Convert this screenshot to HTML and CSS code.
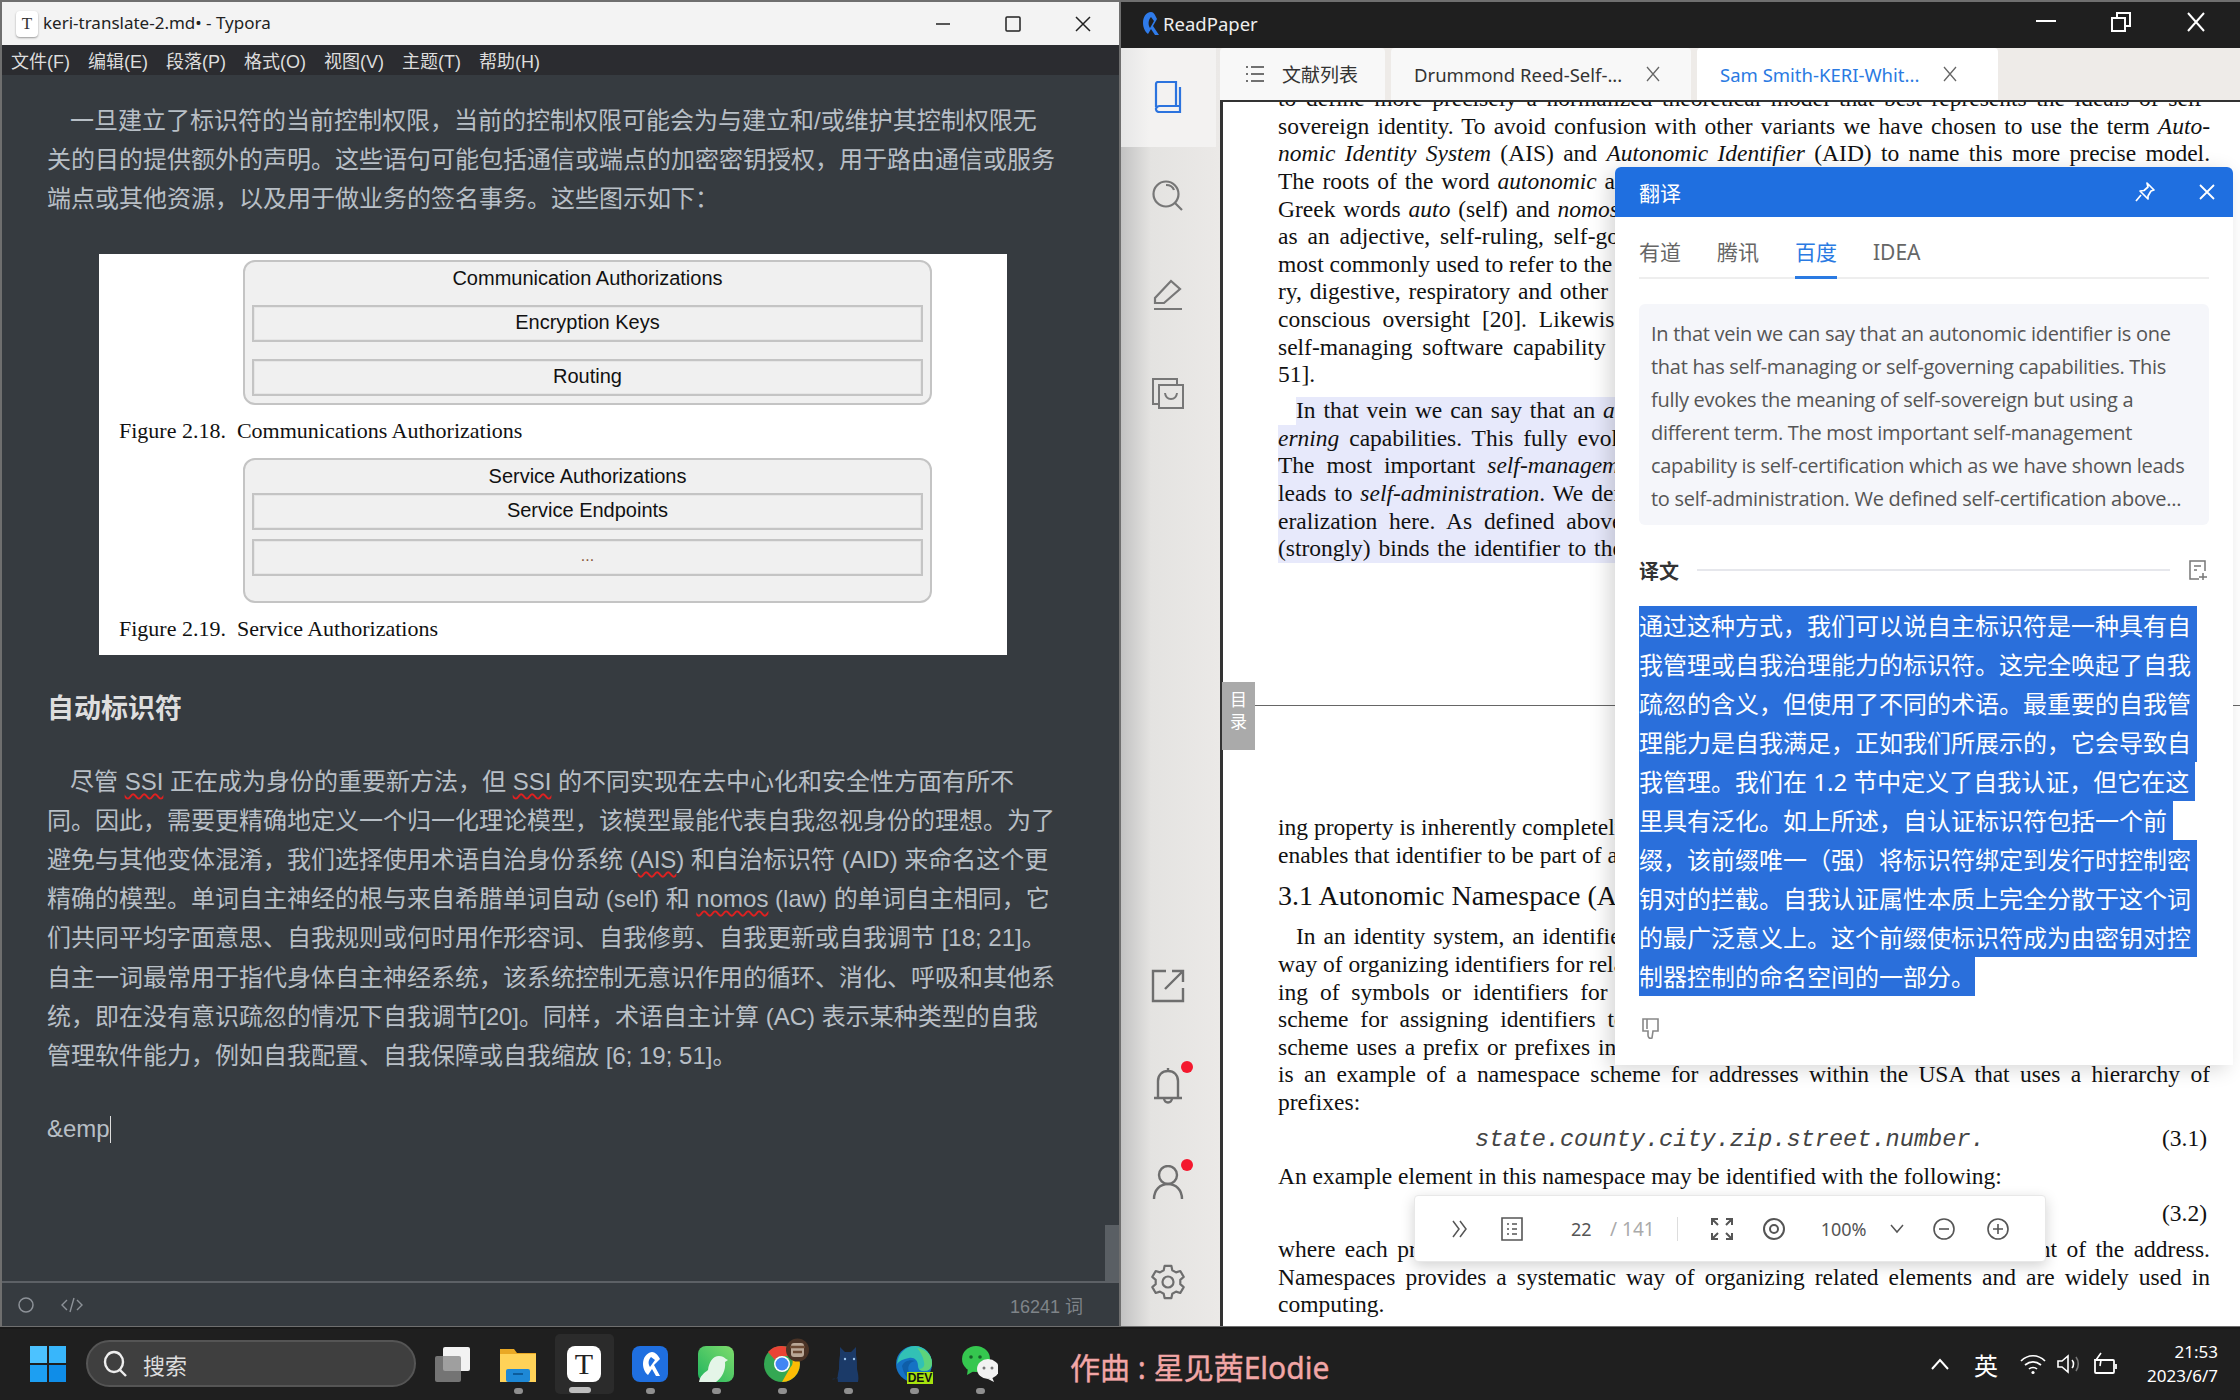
FILE: index.html

```html
<!DOCTYPE html>
<html lang="zh-CN">
<head>
  <meta charset="UTF-8" />
  <title>Typora + ReadPaper</title>
  <link rel="stylesheet" href="styles.css">
</head>
<body>

<div class="desktop">

  <!-- typora -->
  <section class="typora">
    <div class="ty-title">
      <span class="ty-logo">T</span>
      <span class="ty-name">keri-translate-2.md• - Typora</span>
      <span class="win-btns">
        <svg width="22" height="22" viewBox="0 0 22 22"><path d="M4 11h14" stroke="#222" stroke-width="1.5"/></svg>
        <svg width="22" height="22" viewBox="0 0 22 22"><rect x="4" y="4" width="14" height="14" rx="1" fill="none" stroke="#222" stroke-width="1.5"/></svg>
        <svg width="22" height="22" viewBox="0 0 22 22"><path d="M4 4l14 14M18 4L4 18" stroke="#222" stroke-width="1.5"/></svg>
      </span>
    </div>
    <nav class="ty-menu">
      <span>文件(F)</span><span>编辑(E)</span><span>段落(P)</span><span>格式(O)</span><span>视图(V)</span><span>主题(T)</span><span>帮助(H)</span>
    </nav>
    <div class="ty-doc">
      <p class="para">
        一旦建立了标识符的当前控制权限，当前的控制权限可能会为与建立和/或维护其控制权限无<br>
        关的目的提供额外的声明。这些语句可能包括通信或端点的加密密钥授权，用于路由通信或服务<br>
        端点或其他资源，以及用于做业务的签名事务。这些图示如下：
      </p>
      <div class="figure">
        <div class="fig-box fig-a">
          <div class="fig-title">Communication Authorizations</div>
          <div class="fig-row">Encryption Keys</div>
          <div class="fig-row">Routing</div>
        </div>
        <div class="fig-cap">Figure 2.18.&nbsp; Communications Authorizations</div>
        <div class="fig-box fig-b">
          <div class="fig-title">Service Authorizations</div>
          <div class="fig-row">Service Endpoints</div>
          <div class="fig-row fig-dots">...</div>
        </div>
        <div class="fig-cap">Figure 2.19.&nbsp; Service Authorizations</div>
      </div>
      <h2>自动标识符</h2>
      <p class="para">
        尽管 <u>SSI</u> 正在成为身份的重要新方法，但 <u>SSI</u> 的不同实现在去中心化和安全性方面有所不<br>
        同。因此，需要更精确地定义一个归一化理论模型，该模型最能代表自我忽视身份的理想。为了<br>
        避免与其他变体混淆，我们选择使用术语自治身份系统 (<u>AIS</u>) 和自治标识符 (AID) 来命名这个更<br>
        精确的模型。单词自主神经的根与来自希腊单词自动 (self) 和 <u>nomos</u> (law) 的单词自主相同，它<br>
        们共同平均字面意思、自我规则或何时用作形容词、自我修剪、自我更新或自我调节 [18; 21]。<br>
        自主一词最常用于指代身体自主神经系统，该系统控制无意识作用的循环、消化、呼吸和其他系<br>
        统，即在没有意识疏忽的情况下自我调节[20]。同样，术语自主计算 (AC) 表示某种类型的自我<br>
        管理软件能力，例如自我配置、自我保障或自我缩放 [6; 19; 51]。
      </p>
      <p class="typing">&amp;emp<span class="caret"></span></p>
      <div class="ty-thumb"></div>
    </div>
    <div class="ty-status">
      <svg width="20" height="20" viewBox="0 0 20 20"><circle cx="10" cy="10" r="7" fill="none" stroke="#8d9298" stroke-width="1.5"/></svg>
      <svg width="24" height="20" viewBox="0 0 24 20"><path d="M7 5l-5 5 5 5M17 5l5 5-5 5M14 3l-4 14" fill="none" stroke="#8d9298" stroke-width="1.4"/></svg>
      <span class="ty-words">16241 词</span>
    </div>
  </section>

  <!-- readpaper -->
  <section class="reader">
    <div class="rp-title">
      <svg class="rp-logo" width="22" height="26" viewBox="0 0 22 26"><path d="M11 2C6 2 3 7 3 13c0 4 2 9 5 11l3-5 4 6h4l-6-9 4-7c-2-4-3-7-6-7zM11 7l3 4-4 7c-2-3-2-8 1-11z" fill="#2f7bea"/></svg>
      <span class="rp-name">ReadPaper</span>
      <span class="win-btns rp-btns">
        <svg width="24" height="24" viewBox="0 0 24 24"><path d="M2 11h20" stroke="#fff" stroke-width="2"/></svg>
        <svg width="24" height="24" viewBox="0 0 24 24"><path d="M3 8h13v13H3zM8 8V3h13v13h-5" fill="none" stroke="#fff" stroke-width="2"/></svg>
        <svg width="24" height="24" viewBox="0 0 24 24"><path d="M4 3l16 18M20 3L4 21" stroke="#fff" stroke-width="2"/></svg>
      </span>
    </div>
    <div class="rp-body">
      <aside class="rp-side">
        <div class="side-item side-on"><svg width="28" height="32" viewBox="0 0 28 32" fill="none" stroke="#2b73de" stroke-width="2.2"><path d="M2 26V3a2 2 0 0 1 2-2h18v24H6a4 4 0 0 0-4 2.500 3 3 0 0 0 3 3.500h21V6M8 25h18"/></svg></div>
        <div class="side-item"><svg width="32" height="32" viewBox="0 0 32 32" fill="none" stroke="#777" stroke-width="2.200"><circle cx="14" cy="14" r="12.500"/><path d="M23 23l7 7M14 5c4 0 7 2 8 5"/></svg></div>
        <div class="side-item"><svg width="32" height="32" viewBox="0 0 32 32" fill="none" stroke="#777" stroke-width="2.200"><path d="M2 31h28M3 25v-5L19 3l9 8-16 14z"/></svg></div>
        <div class="side-item"><svg width="34" height="34" viewBox="0 0 34 34" fill="none" stroke="#777" stroke-width="2"><path d="M8 28H2V3h24v5"/><path d="M8 9h24v23H8zM14 17c1 8 11 8 12 0"/></svg></div>
        <div class="side-bottom">
          <div class="side-item"><svg width="34" height="34" viewBox="0 0 34 34" fill="none" stroke="#6e6e6e" stroke-width="2.400"><path d="M15 2H2v30h30V19M21 2h11v11M32 2L14 20"/></svg></div>
          <div class="side-item"><svg width="30" height="38" viewBox="0 0 30 38" fill="none" stroke="#6e6e6e" stroke-width="2.400"><path d="M1 32h28M5 32V15C5 9 9 5 15 5s10 4 10 10v17M15 5V2M11 32c0 6 8 6 8 0"/></svg><i class="red-dot"></i></div>
          <div class="side-item"><svg width="32" height="36" viewBox="0 0 32 36" fill="none" stroke="#6e6e6e" stroke-width="2.400"><circle cx="16" cy="10" r="9"/><path d="M2 34c0-9 6-15 14-15s14 6 14 15"/></svg><i class="red-dot"></i></div>
          <div class="side-item"><svg width="36" height="36" viewBox="0 0 36 36" fill="none" stroke="#6e6e6e" stroke-width="2.200" stroke-linejoin="round"><path d="M13.700 6.300L14.600 1.900H21.400L22.300 6.300 26 8.400 30.300 7 33.700 12.900 30.300 15.800V20.200L33.700 23.100 30.300 29 26 27.600 22.300 29.800 21.400 34.100H14.600L13.700 29.800 10 27.600 5.700 29 2.300 23.100 5.700 20.200V15.800L2.300 12.900 5.700 7 10 8.400z"/><circle cx="18" cy="18" r="5.500"/></svg></div>
        </div>
      </aside>
      <div class="rp-main">
        <div class="tabs">
          <div class="tab tab-list">
            <svg width="22" height="22" viewBox="0 0 22 22" fill="none" stroke="#444" stroke-width="1.6"><path d="M7 4h13M7 11h13M7 18h13M2 4h2M2 11h2M2 18h2"/></svg>
            文献列表
          </div>
          <div class="tab tab-doc">Drummond Reed-Self-...
            <svg class="tab-x" width="16" height="16" viewBox="0 0 16 16"><path d="M2 1l12 14M14 1L2 15" stroke="#666" stroke-width="1.300"/></svg>
          </div>
          <div class="tab tab-doc tab-on">Sam Smith-KERI-Whit...
            <svg class="tab-x" width="16" height="16" viewBox="0 0 16 16"><path d="M2 1l12 14M14 1L2 15" stroke="#666" stroke-width="1.300"/></svg>
          </div>
        </div>
        <div class="pdf">
          <div class="page page-one">
            <div class="pl">to define more precisely a normalized theoretical model that best represents the ideals of self-</div>
            <div class="pl">sovereign identity. To avoid confusion with other variants we have chosen to use the term <i>Auto-</i></div>
            <div class="pl"><i>nomic Identity System</i> (AIS) and <i>Autonomic Identifier</i> (AID) to name this more precise model.</div>
            <div class="pl pl-cut ws1">The roots of the word <i>autonomic</i> are drawn from an older family of words that begin with</div>
            <div class="pl pl-cut ws1">Greek words <i>auto</i> (self) and <i>nomos</i> (law). The word autonomic means self-governing when</div>
            <div class="pl pl-cut ws2">as an adjective, self-ruling, self-governing, or self-managing. The term autonomic is</div>
            <div class="pl pl-cut">most commonly used to refer to the autonomic nervous system which controls the circula-</div>
            <div class="pl pl-cut ws1">ry, digestive, respiratory and other involuntary bodily functions without any</div>
            <div class="pl pl-cut ws3">conscious oversight [20]. Likewise, the term autonomic computing refers to a type of</div>
            <div class="pl pl-cut ws2">self-managing software capability such as self-configuration, self-healing or scaling [6; 19;</div>
            <div class="pl pl-end">51].</div>
            <div class="hl-block">
              <div class="pl hl pl-ind pl-cut ws1">In that vein we can say that an <i>autonomic identifier</i> is one that has <i>self-managing</i> or <i>self-gov-</i></div>
              <div class="pl hl pl-cut ws2"><i>erning</i> capabilities. This fully evokes the meaning of self-sovereign but using a different term.</div>
              <div class="pl hl pl-cut ws3">The most important <i>self-management</i> capability is <i>self-certification</i> which as we have shown</div>
              <div class="pl hl pl-cut ws1">leads to <i>self-administration</i>. We defined <i>self-certification</i> above in section 1.2 but it has a gen-</div>
              <div class="pl hl pl-cut ws3">eralization here. As defined above, a self-certifying identifier includes a prefix that uniquely</div>
              <div class="pl hl pl-end ws1">(strongly) binds the identifier to the controlling key pair at issuance.</div>
            </div>
          </div>
          <div class="page page-two">
            <div class="pl pl-end">ing property is inherently completely decentralized to the identifier.</div>
            <div class="pl pl-end">enables that identifier to be part of a broader namespace.</div>
            <h3 class="pdf-h">3.1 Autonomic Namespace (AN)</h3>
            <div class="pl pl-ind pl-cut ws1">In an identity system, an identifier may be drawn from a namespace. A namespace is a</div>
            <div class="pl pl-cut">way of organizing identifiers for related resources. It groups the identifiers under an order-</div>
            <div class="pl pl-cut ws3">ing of symbols or identifiers for resources. A namespace is usually a hierarchical naming</div>
            <div class="pl pl-cut ws3">scheme for assigning identifiers to resources. In other words, a naming system with a</div>
            <div class="pl pl-cut ws1">scheme uses a prefix or prefixes in a hierarchical fashion. For example, a postal address</div>
            <div class="pl">is an example of a namespace scheme for addresses within the USA that uses a hierarchy of</div>
            <div class="pl pl-end">prefixes:</div>
            <div class="eq"><span class="eq-mono">state.county.city.zip.street.number.</span><span class="eq-no">(3.1)</span></div>
            <div class="pl pl-end pl-after">An example element in this namespace may be identified with the following:</div>
            <div class="eq eq-two"><span class="eq-no">(3.2)</span></div>
            <div class="pl">where each prefix is a more specific part of the hierarchy and the last element of the address.</div>
            <div class="pl">Namespaces provides a systematic way of organizing related elements and are widely used in</div>
            <div class="pl pl-end">computing.</div>
          </div>
        </div>
      </div>
    </div>

    <div class="toc-tab">目<br>录</div>

    <!-- translate popup -->
    <div class="popup">
      <div class="pop-head">
        <span>翻译</span>
        <svg width="22" height="22" viewBox="0 0 22 22" fill="none" stroke="#fff" stroke-width="1.700" stroke-linejoin="round"><path d="M13 2l7 7-3 1-3 5 0 3-8-8 4-.5 4-3.500zM7 14l-5 6"/></svg>
        <svg width="18" height="18" viewBox="0 0 18 18"><path d="M2 2l14 14M16 2L2 16" stroke="#fff" stroke-width="1.800"/></svg>
      </div>
      <div class="pop-tabs">
        <span>有道</span><span>腾讯</span><span class="pop-on">百度</span><span>IDEA</span>
      </div>
      <div class="src-box">
        In that vein we can say that an autonomic identifier is one<br>
        that has self-managing or self-governing capabilities. This<br>
        fully evokes the meaning of self-sovereign but using a<br>
        different term. The most important self-management<br>
        capability is self-certification which as we have shown leads<br>
        to self-administration. We defined self-certification above...
      </div>
      <div class="yi-row">
        <b>译文</b><span class="yi-line"></span>
        <svg width="20" height="22" viewBox="0 0 20 22" fill="none" stroke="#777" stroke-width="1.5"><path d="M11 20H2V2h15v10M6 7h7M6 11h3M15 14v7M11 18h8"/></svg>
      </div>
      <div class="sel-text">
        <span>通过这种方式，我们可以说自主标识符是一种具有自</span>
        <span>我管理或自我治理能力的标识符。这完全唤起了自我</span>
        <span>疏忽的含义，但使用了不同的术语。最重要的自我管</span>
        <span>理能力是自我满足，正如我们所展示的，它会导致自</span>
        <span>我管理。我们在 1.2 节中定义了自我认证，但它在这</span>
        <span>里具有泛化。如上所述，自认证标识符包括一个前</span>
        <span>缀，该前缀唯一（强）将标识符绑定到发行时控制密</span>
        <span>钥对的拦截。自我认证属性本质上完全分散于这个词</span>
        <span>的最广泛意义上。这个前缀使标识符成为由密钥对控</span>
        <span class="sel-last">制器控制的命名空间的一部分。</span>
      </div>
      <svg class="thumb" width="20" height="24" viewBox="0 0 20 24" fill="none" stroke="#888" stroke-width="1.6"><path d="M2 2h15v12h-5l-1 7c-3 1-4-1-4-3v-4H2zM6 2v10"/></svg>
    </div>

    <!-- pdf toolbar -->
    <div class="pdf-bar">
      <svg class="b-more" width="18" height="22" viewBox="0 0 18 22" fill="none" stroke="#555" stroke-width="1.5"><path d="M2 3l6 8-6 8M9 3l6 8-6 8"/></svg>
      <svg class="b-list" width="22" height="24" viewBox="0 0 22 24" fill="none" stroke="#555" stroke-width="1.6"><path d="M1 1h20v22H1zM6 7h2M11 7h5M6 12h2M11 12h5M6 17h2M11 17h5"/></svg>
      <span class="b-page">22</span><span class="b-total">/ 141</span>
      <i class="b-sep"></i>
      <svg class="b-full" width="22" height="22" viewBox="0 0 22 22" fill="none" stroke="#555" stroke-width="2"><path d="M1 7V1h6M15 1h6v6M21 15v6h-6M7 21H1v-6M2 2l5 5M20 2l-5 5M20 20l-5-5M2 20l5-5"/></svg>
      <svg class="b-eye" width="24" height="22" viewBox="0 0 24 22" fill="none" stroke="#555" stroke-width="2"><circle cx="12" cy="11" r="10"/><circle cx="12" cy="11" r="4"/></svg>
      <span class="b-zoom">100%</span>
      <svg class="b-down" width="16" height="12" viewBox="0 0 16 12" fill="none" stroke="#555" stroke-width="1.5"><path d="M2 2l6 7 6-7"/></svg>
      <svg class="b-minus" width="22" height="22" viewBox="0 0 22 22" fill="none" stroke="#555" stroke-width="1.6"><circle cx="11" cy="11" r="10"/><path d="M6 11h10"/></svg>
      <svg class="b-plus" width="22" height="22" viewBox="0 0 22 22" fill="none" stroke="#555" stroke-width="1.6"><circle cx="11" cy="11" r="10"/><path d="M6 11h10M11 6v10"/></svg>
    </div>
  </section>
</div>

<!-- taskbar -->
<footer class="taskbar">
  <div class="tb-cell">
    <svg class="tb-ico" viewBox="0 0 36 36"><path d="M0 0h17v17H0z" fill="#4cc2ff"/><path d="M19 0h17v17H19z" fill="#38b6fb"/><path d="M0 19h17v17H0z" fill="#1d9ff2"/><path d="M19 19h17v17H19z" fill="#0f8de8"/></svg>
  </div>
  <div class="search">
    <svg width="26" height="28" viewBox="0 0 26 28" fill="none" stroke="#eee" stroke-width="2.4"><ellipse cx="11" cy="12" rx="9" ry="10"/><path d="M17 20l6 6"/></svg>
    <span>搜索</span>
  </div>
  <div class="tb-cell tb-task">
    <svg class="tb-ico" viewBox="0 0 36 36"><rect x="9" y="1" width="27" height="24" rx="2" fill="#f2f2f2"/><rect x="1" y="10" width="26" height="26" rx="2" fill="#8a8a8a" opacity=".8"/></svg>
  </div>
  <div class="tb-cell">
    <svg class="tb-ico" viewBox="0 0 36 36"><path d="M0 3h14l3 4h19v29H0z" fill="#e9a825"/><rect y="8" width="36" height="28" fill="#ffd258"/><rect x="6" y="23" width="24" height="13" rx="2" fill="#1e88d6"/><path d="M13 28h10" stroke="#0c5c9c" stroke-width="2"/></svg>
    <i class="tb-dot"></i>
  </div>
  <div class="tb-cell tb-active">
    <span class="tb-typora">T</span>
    <i class="tb-pill"></i>
  </div>
  <div class="tb-cell">
    <svg class="tb-ico" viewBox="0 0 36 36"><rect width="36" height="36" rx="8" fill="#1f6fe0"/><path d="M20 6c-6 1-9 6-9 12 0 4 2 9 5 11l4-6 4 7h4l-6-11 6-6c-2-4-5-7-8-7zm-1 5l4 3-5 7c-2-3-2-7 1-10z" fill="#fff"/></svg>
    <i class="tb-dot"></i>
  </div>
  <div class="tb-cell">
    <svg class="tb-ico" viewBox="0 0 36 36"><defs><linearGradient id="pg" x1="1" y1="0" x2="0" y2="1"><stop offset="0" stop-color="#7fdc6c"/><stop offset="1" stop-color="#1fb45e"/></linearGradient></defs><rect width="36" height="36" rx="8" fill="url(#pg)"/><path d="M1 36c1-6 5-9 9-12 1-8 5-14 11-14 3 0 5 1 7 3l2 1-3 2c1 8-3 16-9 20z" fill="#e4f5e8"/></svg>
    <i class="tb-dot"></i>
  </div>
  <div class="tb-cell tb-chrome">
    <svg class="tb-ico" viewBox="0 0 36 36"><circle cx="18" cy="18" r="18" fill="#34a853"/><path d="M18 0a18 18 0 0 1 16 10H18a8 8 0 0 0-7 4L4 6a18 18 0 0 1 14-6z" fill="#ea4335"/><path d="M34 10a18 18 0 0 1-16 26l8-14a8 8 0 0 0 0-12z" fill="#fbbc05"/><circle cx="18" cy="18" r="8" fill="#fff"/><circle cx="18" cy="18" r="6.5" fill="#4285f4"/></svg>
    <svg class="tb-badge" width="23" height="24" viewBox="0 0 23 24"><circle cx="11.500" cy="12" r="11.500" fill="#4a3326"/><rect x="5" y="5" width="13" height="14" rx="3" fill="#b9a796"/><path d="M4 9h15M7 14h9" stroke="#6b4a34" stroke-width="2.500"/></svg>
    <i class="tb-dot"></i>
  </div>
  <div class="tb-cell">
    <svg class="tb-ico" viewBox="0 0 36 36"><path d="M2 33c3 1 5-1 7-3l1 2z" fill="#1b3a68"/><path d="M8 36c-1-4 0-9 1-13 0-5 0-9 1-14l0-8 5 5h6l5-5 0 8c1 5 1 9 1 14 1 4 2 9 1 13z" fill="#1b3a68"/><circle cx="15" cy="13" r="1.200" fill="#9cc4ee"/><circle cx="24" cy="13" r="1.200" fill="#9cc4ee"/></svg>
    <i class="tb-dot"></i>
  </div>
  <div class="tb-cell tb-edge">
    <svg class="tb-ico" viewBox="0 0 36 36"><circle cx="18" cy="18" r="18" fill="#1572c4"/><path d="M1 18C2 7 10 0 19 0c10 0 17 8 17 17 0 5-3 8-8 8-4 0-6-2-6-5 0-6-4-9-9-8-6 1-10 3-12 6z" fill="#32c1b5"/><path d="M21 2c8 1 15 7 15 15 0 5-3 8-8 8-2 0-4-1-5-2 4 0 6-3 5-7-1-6-4-11-7-14z" fill="#5ed37b"/><path d="M6 20c2-5 8-7 13-5-6 1-8 6-6 12 1 4 6 7 11 7-7 3-15 0-18-14z" fill="#0e5ea8"/></svg>
    <span class="dev-tag">DEV</span>
    <i class="tb-dot"></i>
  </div>
  <div class="tb-cell">
    <svg class="tb-ico" viewBox="0 0 36 36"><ellipse cx="14" cy="13" rx="14" ry="13" fill="#35c74f"/><path d="M6 22l-1 7 7-4z" fill="#35c74f"/><ellipse cx="26" cy="23" rx="11" ry="10" fill="#f2f2f2"/><path d="M30 31l2 5-6-3z" fill="#f2f2f2"/><circle cx="9" cy="11" r="1.8" fill="#17612a"/><circle cx="18" cy="11" r="1.8" fill="#17612a"/><circle cx="22" cy="22" r="1.5" fill="#777"/><circle cx="30" cy="22" r="1.5" fill="#777"/></svg>
    <i class="tb-dot"></i>
  </div>
  <div class="song">作曲 : 星见茜Elodie</div>
  <div class="tray">
    <svg width="20" height="14" viewBox="0 0 20 14" fill="none" stroke="#fff" stroke-width="2"><path d="M2 12l8-9 8 9"/></svg>
    <span class="tray-ime">英</span>
    <svg width="26" height="22" viewBox="0 0 26 22" fill="none" stroke="#fff" stroke-width="1.7"><path d="M1 8c7-7 17-7 24 0M5 12c5-4 11-4 16 0M9 16c2-2 6-2 8 0"/><circle cx="13" cy="19.5" r="1.6" fill="#fff" stroke="none"/></svg>
    <svg width="26" height="22" viewBox="0 0 26 22" fill="none" stroke="#fff" stroke-width="1.6"><path d="M2 8h4l6-5v16l-6-5H2z"/><path d="M16 7c2 2 2 6 0 8"/><path d="M20 4c3 4 3 10 0 14" stroke="#777"/></svg>
    <svg width="26" height="24" viewBox="0 0 26 24" fill="none" stroke="#fff" stroke-width="1.8"><path d="M3 8h18a1 1 0 0 1 1 1v11a1 1 0 0 1-1 1H4a1 1 0 0 1-1-1zM24 12v5"/><path d="M9 1L4 8h5l-1 6" stroke-width="1.6"/></svg>
    <div class="clock">21:53<br>2023/6/7</div>
  </div>
</footer>

</body>
</html>
```

FILE: styles.css

```css
* {
  box-sizing: border-box;
}
html, body {
  margin: 0;
  height: 100%;
}
body {
  width: 2240px;
  height: 1400px;
  overflow: hidden;
  background: #6f6f6f;
  font-family: "Liberation Sans", "Noto Sans CJK SC", sans-serif;
  display: flex;
  flex-direction: column;
}
svg {
  flex: none;
  display: block;
}
.desktop {
  height: 1327px;
  display: flex;
  padding: 2px 0 1px 0;
  gap: 2px;
}

/* typora */
.typora {
  width: 1117px;
  margin-left: 2px;
  display: flex;
  flex-direction: column;
  background: #363b40;
}
.ty-title {
  height: 43px;
  flex: none;
  background: #f3f3f3;
  display: flex;
  align-items: center;
  padding-left: 14px;
}
.ty-logo {
  width: 22px;
  height: 26px;
  background: #fff;
  border-radius: 4px;
  box-shadow: 0 1px 2px #999;
  font: 17px "Liberation Serif", serif;
  color: #333;
  text-align: center;
  line-height: 26px;
}
.ty-name {
  margin: 0 0 2px 5px;
  font: 17px "Noto Sans", sans-serif;
  color: #222;
}
.win-btns {
  margin-left: auto;
  display: flex;
  gap: 48px;
  padding-right: 25px;
}
.ty-menu {
  height: 30px;
  flex: none;
  background: #2b2c30;
  color: #ddd;
  font-size: 18px;
  display: flex;
  align-items: center;
  padding-left: 9px;
  gap: 18px;
}
.ty-doc {
  flex: 1;
  position: relative;
  padding: 26px 0 0 45px;
  color: #b8bfc6;
  font-size: 24px;
}
.para {
  margin: 0;
  line-height: 39.2px;
  white-space: nowrap;
  text-indent: 23px;
}
.para u {
  text-decoration: underline wavy #e02020 1.5px;
  text-underline-offset: 3px;
}
.figure {
  width: 908px;
  height: 401px;
  margin: 35px 0 0 52px;
  padding: 6px 0 0 20px;
  background: #fff;
  color: #111;
}
.fig-box {
  width: 689px;
  margin-left: 124px;
  padding: 0 7px;
  background: #f0f0f0;
  border: 2px solid #c4c4c4;
  border-radius: 12px;
  font-size: 20px;
  text-align: center;
}
.fig-a {
  height: 145px;
}
.fig-b {
  height: 145px;
}
.fig-title {
  line-height: 32px;
}
.fig-a .fig-title {
  height: 43px;
}
.fig-b .fig-title {
  height: 33px;
}
.fig-row {
  height: 37px;
  line-height: 30px;
  border: 2px solid #c4c4c4;
  box-shadow: inset 0 0 0 1px #e6e6e6;
}
.fig-a .fig-row {
  margin-bottom: 17px;
}
.fig-b .fig-row {
  margin-bottom: 9px;
}
.fig-dots {
  color: #8a5a3a;
  font-size: 16px;
}
.fig-cap {
  height: 53px;
  font: 22px/52px "Liberation Serif", serif;
}
h2 {
  margin: 34px 0 33px;
  font-size: 27px;
  line-height: 40px;
  color: #dedede;
}
.typing {
  margin: 34px 0 0;
  line-height: 39px;
}
.caret {
  display: inline-block;
  width: 1px;
  height: 27px;
  background: #ddd;
  vertical-align: -6px;
}
.ty-thumb {
  position: absolute;
  right: 0;
  bottom: 0;
  width: 14px;
  height: 56px;
  background: #5a5f64;
}
.ty-status {
  height: 45px;
  flex: none;
  border-top: 2px solid #5d6166;
  display: flex;
  align-items: center;
  padding: 0 36px 0 14px;
  gap: 24px;
  color: #7f8489;
  font-size: 18px;
}
.ty-words {
  margin-left: auto;
}

/* readpaper */
.reader {
  flex: 1;
  position: relative;
  display: flex;
  flex-direction: column;
  min-width: 0;
}
.rp-title {
  height: 46px;
  flex: none;
  background: #1f1f1f;
  display: flex;
  align-items: center;
  padding: 0 0 4px 19px;
}
.rp-name {
  margin-left: 1px;
  font: 18.5px "Noto Sans", sans-serif;
  color: #eee;
}
.rp-btns {
  gap: 51px;
  padding-right: 32px;
  margin-bottom: 2px;
}
.rp-body {
  flex: 1;
  display: flex;
  min-height: 0;
}
.rp-side {
  width: 99px;
  flex: none;
  background: linear-gradient(90deg, #c2c2c2, #e4e3e1 30%, #ebe9e7);
  display: flex;
  flex-direction: column;
}
.side-item {
  height: 98.5px;
  flex: none;
  position: relative;
  display: flex;
  align-items: center;
  justify-content: center;
  padding-right: 6px;
}
.side-on {
  width: 95px;
  padding-right: 2px;
  background: linear-gradient(90deg, #e6e6e6, #f3f2f1 30%);
}
.side-bottom {
  margin-top: auto;
  margin-bottom: -5px;
}
.red-dot {
  position: absolute;
  right: 27px;
  top: 25px;
  width: 12px;
  height: 12px;
  border-radius: 50%;
  background: #f4182e;
}
.rp-main {
  flex: 1;
  min-width: 0;
  display: flex;
  flex-direction: column;
  background: #fff;
}
.tabs {
  height: 52px;
  flex: none;
  display: flex;
  gap: 6px;
  background: #eeebe8;
  color: #333;
  font: 18.5px "Noto Sans", "Noto Sans CJK SC", sans-serif;
}
.tab {
  display: flex;
  align-items: center;
  background: #f8f8f8;
  border-radius: 4px 4px 0 0;
}
.tab-list {
  width: 165px;
  padding-left: 24px;
  gap: 16px;
  font-size: 19px;
}
.tab-doc {
  width: 300px;
  padding-left: 23px;
}
.tab-on {
  width: 301px;
  background: #fff;
  color: #2a7ae2;
}
.tab-x {
  margin-left: 23px;
}
.pdf {
  flex: 1;
  min-height: 0;
  overflow: hidden;
  border-top: 2px solid #333;
  border-left: 3px solid #333;
  padding-left: 55px;
  color: #111;
  font: 23.5px "Liberation Serif", serif;
}
.page-one {
  margin-top: -17px;
  height: 621px;
  border-bottom: 1px solid #666;
  margin-left: -55px;
  padding-left: 55px;
}
.page-two {
  margin-top: 108px;
}
.pl {
  width: 932px;
  height: 27.65px;
  line-height: 27.65px;
  overflow: hidden;
  text-align: justify;
  text-align-last: justify;
}
.pl-end {
  text-align: left;
  text-align-last: left;
}
.pl-cut {
  text-align: left;
  text-align-last: left;
  white-space: nowrap;
}
.ws1 {
  word-spacing: 2px;
}
.ws2 {
  word-spacing: 4px;
}
.ws3 {
  word-spacing: 6px;
}
.pl-ind {
  padding-left: 18px;
}
.hl-block {
  margin-top: 8px;
}
.hl {
  background: #e7e9fb;
}
.pl-ind.hl {
  padding-left: 0;
  margin-left: 18px;
  width: 914px;
}
.pdf-h {
  margin: 10px 0 10px;
  font-size: 28px;
  font-weight: normal;
  line-height: 34px;
}
.eq {
  width: 932px;
  height: 36px;
  line-height: 36px;
  position: relative;
  padding: 0 0 0 197px;
  margin-top: 3px;
}
.eq-mono {
  font: italic 23.6px "Liberation Mono", monospace;
  color: #444;
}
.eq-no {
  position: absolute;
  right: 3px;
  top: 0;
}
.pl-after {
  margin-top: 7px;
}
.eq-two {
  margin-top: 5px;
  margin-bottom: 4.5px;
}
.toc-tab {
  position: absolute;
  left: 101px;
  top: 680px;
  width: 33px;
  height: 68px;
  padding-top: 8px;
  background: #aaa;
  color: #fff;
  font-size: 17px;
  line-height: 22px;
  text-align: center;
}
.popup {
  position: absolute;
  left: 494px;
  top: 165px;
  width: 618px;
  height: 898px;
  background: #fff;
  border-radius: 6px 6px 0 0;
  box-shadow: -6px 4px 20px rgba(0, 0, 0, .16);
  padding: 0 24px;
  font-family: "Noto Sans", "Noto Sans CJK SC", sans-serif;
}
.pop-head {
  height: 50px;
  margin: 0 -24px;
  padding: 0 17px 0 24px;
  background: #1f6fe0;
  border-radius: 6px 6px 0 0;
  color: #fff;
  font-size: 21px;
  display: flex;
  align-items: center;
}
.pop-head span {
  margin-right: auto;
}
.pop-head svg + svg {
  margin-left: 42px;
}
.pop-tabs {
  height: 62px;
  display: flex;
  gap: 36px;
  padding-top: 18px;
  border-bottom: 2px solid #eee;
  color: #666;
  font-size: 21px;
  line-height: 34px;
}
.pop-on {
  height: 44px;
  color: #2a7ae2;
  border-bottom: 3px solid #2a7ae2;
}
.src-box {
  margin-top: 25px;
  height: 221px;
  padding: 13px 12px 0;
  background: #f5f6fa;
  border-radius: 6px;
  color: #555;
  font: 20px/33px "Open Sans", sans-serif;
  letter-spacing: -.29px;
  white-space: nowrap;
}
.yi-row {
  margin-top: 30px;
  height: 30px;
  display: flex;
  align-items: center;
  font-size: 20px;
  color: #333;
}
.yi-line {
  width: 473px;
  height: 2px;
  margin: 0 18px;
  background: #e6e7ec;
}
.sel-text {
  margin-top: 21px;
  font-size: 24px;
  line-height: 39px;
  color: #fff;
}
.sel-text span {
  display: block;
  width: fit-content;
  height: 39px;
  padding-right: 6px;
  background: #2a6fdb;
  white-space: nowrap;
}
.sel-text .sel-last {
  padding-right: 0;
}
.thumb {
  margin: 21px 0 0 2px;
}
.pdf-bar {
  position: absolute;
  left: 293px;
  top: 1193px;
  width: 632px;
  height: 67px;
  background: #fff;
  border: 1px solid #e8e8e8;
  border-radius: 4px;
  box-shadow: 0 4px 14px rgba(0, 0, 0, .18);
  display: flex;
  align-items: center;
  color: #555;
  font: 18px "Noto Sans", sans-serif;
}
.b-more { margin-left: 36px; }
.b-list { margin-left: 32px; }
.b-page { margin-left: 48px; width: 39px; }
.b-total { color: #aaa; font-size: 19px; }
.b-sep {
  width: 1px;
  height: 24px;
  margin-left: 22px;
  background: #ddd;
}
.b-full { margin-left: 33px; }
.b-eye { margin-left: 29px; }
.b-zoom { margin-left: 35px; width: 66px; }
.b-down { margin-left: 2px; }
.b-minus { margin-left: 28px; }
.b-plus { margin-left: 32px; }

/* taskbar */
.taskbar {
  flex: 1;
  background: #1f1f1f;
  border-top: 2px solid #1a1a1a;
  display: flex;
  align-items: flex-start;
  padding-left: 15px;
  position: relative;
}
.tb-cell {
  width: 66px;
  height: 71px;
  flex: none;
  position: relative;
  display: flex;
  justify-content: center;
}
.tb-ico {
  width: 36px;
  height: 36px;
  margin-top: 17px;
}
.tb-dot {
  position: absolute;
  left: 29px;
  top: 59px;
  width: 9px;
  height: 6px;
  border-radius: 3px;
  background: #8f8f8f;
}
.tb-task {
  margin-left: 3px;
}
.tb-active::before {
  content: "";
  position: absolute;
  left: 4px;
  top: 5px;
  width: 59px;
  height: 60px;
  background: #2b2b2b;
  border-radius: 5px;
}
.tb-typora {
  position: relative;
  width: 34px;
  height: 36px;
  margin-top: 17px;
  background: #fff;
  border-radius: 8px;
  color: #222;
  font: 30px/36px "Liberation Serif", serif;
  text-align: center;
}
.tb-pill {
  position: absolute;
  left: 18px;
  top: 58px;
  width: 22px;
  height: 6px;
  border-radius: 3px;
  background: #bdbdbd;
}
.tb-badge {
  position: absolute;
  left: 37px;
  top: 9px;
}
.dev-tag {
  position: absolute;
  left: 26px;
  top: 43px;
  width: 26px;
  height: 12px;
  background: #a7e30e;
  color: #111;
  font-size: 12px;
  font-weight: bold;
  line-height: 12px;
  text-align: center;
}
.search {
  width: 330px;
  height: 47px;
  flex: none;
  margin: 11px 0 0 5px;
  padding-left: 15px;
  display: flex;
  align-items: center;
  gap: 14px;
  background: #3f3f3f;
  border: 2px solid #555;
  border-radius: 24px;
  color: #ddd;
  font: 22px "Noto Sans CJK SC", sans-serif;
}
.song {
  margin: 17px 0 0 57px;
  color: #f2a6a6;
  font: 30px/44px "Noto Sans", "Noto Sans CJK SC", sans-serif;
  -webkit-text-stroke: .4px #f2a6a6;
  white-space: nowrap;
}
.tray {
  margin-left: auto;
  height: 70px;
  padding-right: 22px;
  display: flex;
  align-items: center;
  color: #fff;
}
.tray svg + svg {
  margin-left: 10px;
}
.tray-ime {
  margin: 0 22px 0 24px;
  font-size: 24px;
}
.clock {
  width: 100px;
  margin-left: 0;
  font: 17px/24px "Noto Sans", sans-serif;
  text-align: right;
}
```
